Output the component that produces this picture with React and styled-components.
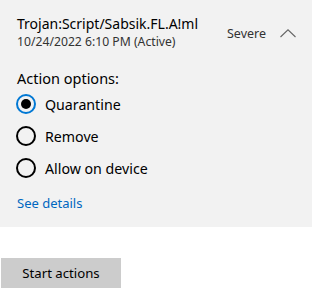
import React, { useState } from "react"
import styled, { createGlobalStyle } from "styled-components"

const GlobalStyle = createGlobalStyle`
  html, body {
    margin: 0;
    padding: 0;
    background: #ffffff;
  }
  body {
    font-family: "Noto Sans", "Open Sans", sans-serif;
    color: #000000;
  }
`

const Page = styled.main`
  width: 316px;
  height: 288px;
  overflow: hidden;
`

const ThreatCard = styled.section`
  box-sizing: border-box;
  width: 312px;
  height: 227px;
  background: #f2f2f2;
  padding: 15px 16px 0 17px;
  display: flex;
  flex-direction: column;
`

const Header = styled.header`
  display: flex;
  justify-content: space-between;
  align-items: center;
`

const TitleBlock = styled.div`
  display: flex;
  flex-direction: column;
`

const ThreatName = styled.h2`
  margin: 0;
  font-size: 14px;
  font-weight: 400;
  line-height: 18px;
  color: #000;
`

const Detected = styled.span`
  font-size: 12.2px;
  line-height: 18px;
  color: #333;
`

const SeverityToggle = styled.button`
  display: flex;
  align-items: center;
  gap: 14px;
  border: 0;
  background: none;
  padding: 0;
  font: inherit;
  font-size: 12.5px;
  color: #333;
  cursor: pointer;
`

const Label = styled.div`
  margin-top: 17px;
  font-size: 14.5px;
  line-height: 20px;
`

const OptionList = styled.div`
  display: flex;
  flex-direction: column;
`

const Option = styled.label`
  display: flex;
  align-items: center;
  gap: 9px;
  height: 32px;
  margin-left: -1px;
  font-size: 14.2px;
  cursor: pointer;
`

const Ring = styled.span`
  box-sizing: border-box;
  width: 20px;
  height: 20px;
  border-radius: 50%;
  border: 2px solid ${(p) => (p.$checked ? "#0078d4" : "#000")};
  display: flex;
  align-items: center;
  justify-content: center;

  &::after {
    content: "";
    width: 10px;
    height: 10px;
    border-radius: 50%;
    background: ${(p) => (p.$checked ? "#000" : "transparent")};
  }
`

const DetailsLink = styled.a`
  margin-top: 10px;
  font-size: 13px;
  line-height: 18px;
  color: #0067c0;
  text-decoration: none;
`

const StartButton = styled.button`
  display: block;
  margin: 31px 0 0 1px;
  width: 120px;
  height: 30px;
  border: 0;
  background: #cccccc;
  font: inherit;
  font-size: 13.2px;
  color: #000;
`

const Chevron = () => (
  <svg width="16" height="9" viewBox="0 0 16 9" fill="none">
    <path d="M0.5 8 L8 0.8 L15.5 8" stroke="#666" strokeWidth="1.1" />
  </svg>
)

const options = ["Quarantine", "Remove", "Allow on device"]

export default function App() {
  const [choice, setChoice] = useState("Quarantine")

  return (
    <Page>
      <GlobalStyle />
      <ThreatCard>
        <Header>
          <TitleBlock>
            <ThreatName>Trojan:Script/Sabsik.FL.A!ml</ThreatName>
            <Detected>10/24/2022 6:10 PM (Active)</Detected>
          </TitleBlock>
          <SeverityToggle>
            Severe
            <Chevron />
          </SeverityToggle>
        </Header>

        <Label>Action options:</Label>
        <OptionList>
          {options.map((o) => (
            <Option key={o} onClick={() => setChoice(o)}>
              <Ring $checked={choice === o} />
              {o}
            </Option>
          ))}
        </OptionList>

        <DetailsLink href="#">See details</DetailsLink>
      </ThreatCard>

      <StartButton>Start actions</StartButton>
    </Page>
  )
}
